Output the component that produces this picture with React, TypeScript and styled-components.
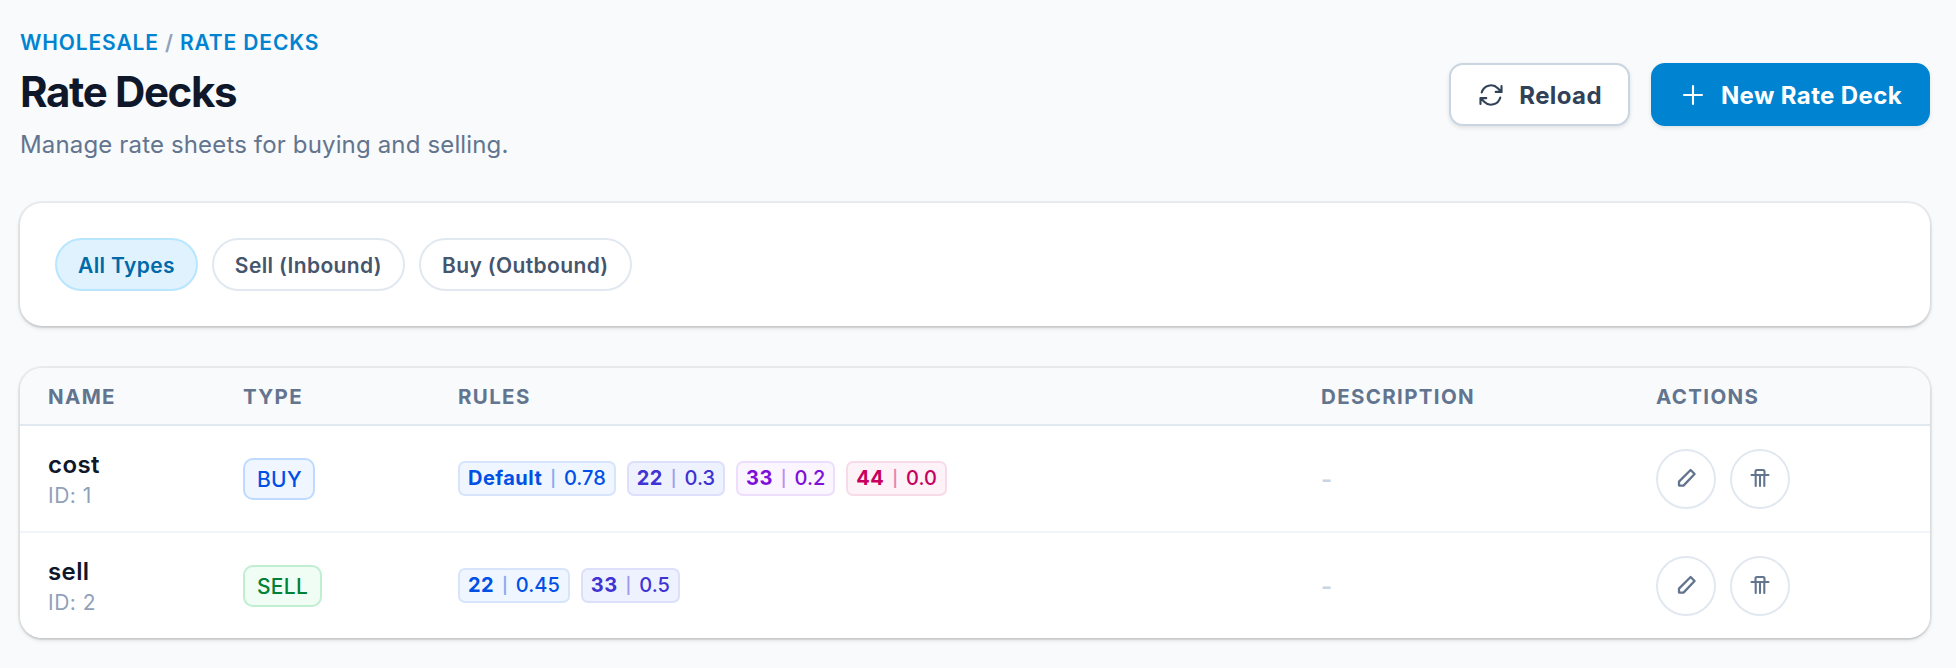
import React from "react";
import styled, { createGlobalStyle } from "styled-components";

const GlobalStyle = createGlobalStyle`
  * { box-sizing: border-box; }
  body {
    margin: 0;
    background: #f8fafc;
    font-family: Inter, "Liberation Sans", sans-serif;
    color: #0f172b;
  }
  button { font-family: inherit; cursor: pointer; }
`;

const Page = styled.main`
  padding: 28px 26px 28px 20px;
  display: flex;
  flex-direction: column;
  gap: 42px;
`;

const Header = styled.header`
  display: flex;
  justify-content: space-between;
  align-items: center;
  height: 133px;
`;

const Breadcrumb = styled.nav`
  padding-top: 1px;
  font-size: 21px;
  line-height: 30px;
  font-weight: 600;
  letter-spacing: 0.86px;
  color: #0084d1;
  text-transform: uppercase;
`;

const Slash = styled.span`
  color: #90a1b9;
`;

const Title = styled.h1`
  margin: 8px 0 0;
  font-size: 42px;
  line-height: 52px;
  font-weight: 700;
  letter-spacing: -1.35px;
`;

const Subtitle = styled.p`
  margin: 9px 0 0;
  font-size: 24px;
  line-height: 36px;
  letter-spacing: 0.15px;
  color: #62748e;
`;

const HeaderActions = styled.div`
  display: flex;
  gap: 21px;
`;

const Button = styled.button<{ $primary?: boolean }>`
  display: flex;
  align-items: center;
  height: 63px;
  padding: 1px 26px 0;
  gap: 14px;
  border-radius: 14px;
  border: 2px solid ${(p) => (p.$primary ? "#0084d1" : "#cad5e2")};
  background: ${(p) => (p.$primary ? "#0084d1" : "#fff")};
  color: ${(p) => (p.$primary ? "#fff" : "#314158")};
  font-size: 24px;
  font-weight: 650;
  letter-spacing: 0.38px;
  box-shadow: 0 2px 4px rgba(0, 0, 0, 0.1);
`;

const Card = styled.section`
  border-radius: 22px;
  background: #fff;
  box-shadow: 0 0 0 2px rgba(0, 0, 0, 0.05), 0 2px 5px rgba(0, 0, 0, 0.12), 0 2px 3px -1px rgba(0, 0, 0, 0.1);
  overflow: hidden;
`;

const FilterBar = styled(Card)`
  display: flex;
  align-items: center;
  gap: 14px;
  height: 123px;
  padding: 0 35px;
`;

const Pill = styled.button<{ $active?: boolean }>`
  height: 53px;
  padding: 1px 21px 0;
  border-radius: 27px;
  border: 2px solid ${(p) => (p.$active ? "#b8e6fe" : "#e2e8f0")};
  background: ${(p) => (p.$active ? "#dff2fe" : "#fff")};
  color: ${(p) => (p.$active ? "#0069a8" : "#45556c")};
  font-size: 21px;
  font-weight: 600;
  letter-spacing: 0.37px;
`;

const Row = styled.div<{ $head?: boolean }>`
  display: grid;
  grid-template-columns: 195px 215px 863px 335px 1fr;
  align-items: center;
  height: ${(p) => (p.$head ? "58px" : "107px")};
  padding: 0 28px;
  background: ${(p) => (p.$head ? "#f8fafc" : "#fff")};
  border-bottom: 2px solid ${(p) => (p.$head ? "#e2e8f0" : "#f1f5f9")};
  &:last-child { border-bottom: 0; height: 105px; }
`;

const HeadCell = styled.span`
  padding-top: 1px;
  font-size: 20.5px;
  font-weight: 700;
  letter-spacing: 1.35px;
  color: #62748e;
`;

const DeckName = styled.div`
  padding-top: 1px;
  font-size: 24px;
  line-height: 34px;
  font-weight: 600;
  letter-spacing: 0.4px;
`;

const DeckId = styled.div`
  font-size: 21px;
  line-height: 28px;
  letter-spacing: 0.5px;
  color: #90a1b9;
`;

const TypeBadge = styled.span<{ $sell: boolean }>`
  display: inline-flex;
  align-items: center;
  height: 42px;
  padding: 1px 11.5px 0 12px;
  border-radius: 10px;
  border: 2px solid ${(p) => (p.$sell ? "#bfeed0" : "#bedbff")};
  background: ${(p) => (p.$sell ? "#f0fdf4" : "#eff6ff")};
  color: ${(p) => (p.$sell ? "#008236" : "#0050e6")};
  font-size: 21px;
  font-weight: 500;
  letter-spacing: 0.3px;
`;

const palette = {
  blue: ["#eff6ff", "#d6e5fb", "#0050e6"],
  indigo: ["#eef2ff", "#dddffb", "#3f33d3"],
  purple: ["#faf5ff", "#eddefb", "#7d0fd9"],
  pink: ["#fdf2f8", "#f7dbe8", "#c6005c"],
};
type Tone = keyof typeof palette;

const Rules = styled.div`
  display: flex;
  gap: 11px;
`;

const RuleChip = styled.span<{ $tone: Tone }>`
  display: flex;
  align-items: center;
  gap: 8px;
  height: 35px;
  padding: 0 8px 1px;
  border-radius: 7px;
  border: 2px solid ${(p) => palette[p.$tone][1]};
  background: ${(p) => palette[p.$tone][0]};
  color: ${(p) => palette[p.$tone][2]};
  font-size: 20px;
  font-weight: 500;
`;

const RulePrefix = styled.b`
  font-weight: 700;
  letter-spacing: 0.45px;
`;

const RuleDivider = styled.span`
  font-size: 16px;
  font-weight: 600;
  opacity: 0.45;
`;

const Muted = styled.span`
  padding-top: 1px;
  font-size: 24px;
  font-weight: 600;
  color: #cad5e2;
`;

const RowActions = styled.div`
  display: flex;
  gap: 14px;
`;

const IconButton = styled.button`
  display: grid;
  place-items: center;
  width: 60px;
  height: 60px;
  padding: 0;
  border-radius: 50%;
  border: 2px solid #e2e8f0;
  background: #fff;
  color: #62748e;
`;

const ReloadIcon = () => (
  <svg width="28" height="28" viewBox="0 0 24 24" fill="none" stroke="currentColor" strokeWidth="1.8" strokeLinecap="round" strokeLinejoin="miter">
    <path d="M16.023 9.348h4.992v-.001M2.985 19.644v-4.992m0 0h4.992m-4.993 0 3.181 3.183a8.25 8.25 0 0 0 13.803-3.7M4.031 9.865a8.25 8.25 0 0 1 13.803-3.7l3.181 3.182m0-4.991v4.99" />
  </svg>
);

const PlusIcon = () => (
  <svg width="28" height="28" viewBox="0 0 28 28" fill="none" stroke="currentColor" strokeWidth="2.1" strokeLinecap="round">
    <path d="M14 5v18M5 14h18" />
  </svg>
);

const PencilIcon = () => (
  <svg width="28" height="28" viewBox="0 0 28 28" fill="none" stroke="currentColor" strokeWidth="2.3" strokeLinejoin="round">
    <path d="M18.600 5l4 4L11.500 20.600H7V16.600z" />
  </svg>
);

const TrashIcon = () => (
  <svg width="28" height="28" viewBox="0 0 28 28" fill="none" stroke="currentColor" strokeWidth="2.1" strokeLinecap="round" strokeLinejoin="round">
    <path d="M5.500 10h17M9.500 10V6.500q0-1.500 1.500-1.500h6q1.500 0 1.500 1.500V10M9.700 10v11M14 10v11M18.300 10v11" />
  </svg>
);

interface Deck {
  id: number;
  name: string;
  type: "BUY" | "SELL";
  rules: [string, string, Tone][];
}

const decks: Deck[] = [
  {
    id: 1,
    name: "cost",
    type: "BUY",
    rules: [
      ["Default", "0.78", "blue"],
      ["22", "0.3", "indigo"],
      ["33", "0.2", "purple"],
      ["44", "0.0", "pink"],
    ],
  },
  {
    id: 2,
    name: "sell",
    type: "SELL",
    rules: [
      ["22", "0.45", "blue"],
      ["33", "0.5", "indigo"],
    ],
  },
];

export default function App() {
  return (
    <>
      <GlobalStyle />
      <Page>
        <Header>
          <div>
            <Breadcrumb>
              Wholesale <Slash>/</Slash> Rate Decks
            </Breadcrumb>
            <Title>Rate Decks</Title>
            <Subtitle>Manage rate sheets for buying and selling.</Subtitle>
          </div>
          <HeaderActions>
            <Button><ReloadIcon />Reload</Button>
            <Button $primary><PlusIcon />New Rate Deck</Button>
          </HeaderActions>
        </Header>
        <FilterBar>
          <Pill $active>All Types</Pill>
          <Pill>Sell (Inbound)</Pill>
          <Pill>Buy (Outbound)</Pill>
        </FilterBar>
        <Card>
          <Row $head>
            {["NAME", "TYPE", "RULES", "DESCRIPTION", "ACTIONS"].map((label) => (
              <HeadCell key={label}>{label}</HeadCell>
            ))}
          </Row>
          {decks.map((deck) => (
            <Row key={deck.id}>
              <div>
                <DeckName>{deck.name}</DeckName>
                <DeckId>ID: {deck.id}</DeckId>
              </div>
              <div>
                <TypeBadge $sell={deck.type === "SELL"}>{deck.type}</TypeBadge>
              </div>
              <Rules>
                {deck.rules.map(([prefix, rate, tone]) => (
                  <RuleChip key={prefix} $tone={tone}>
                    <RulePrefix>{prefix}</RulePrefix>
                    <RuleDivider>|</RuleDivider>
                    <span>{rate}</span>
                  </RuleChip>
                ))}
              </Rules>
              <Muted>-</Muted>
              <RowActions>
                <IconButton aria-label="Edit"><PencilIcon /></IconButton>
                <IconButton aria-label="Delete"><TrashIcon /></IconButton>
              </RowActions>
            </Row>
          ))}
        </Card>
      </Page>
    </>
  );
}
